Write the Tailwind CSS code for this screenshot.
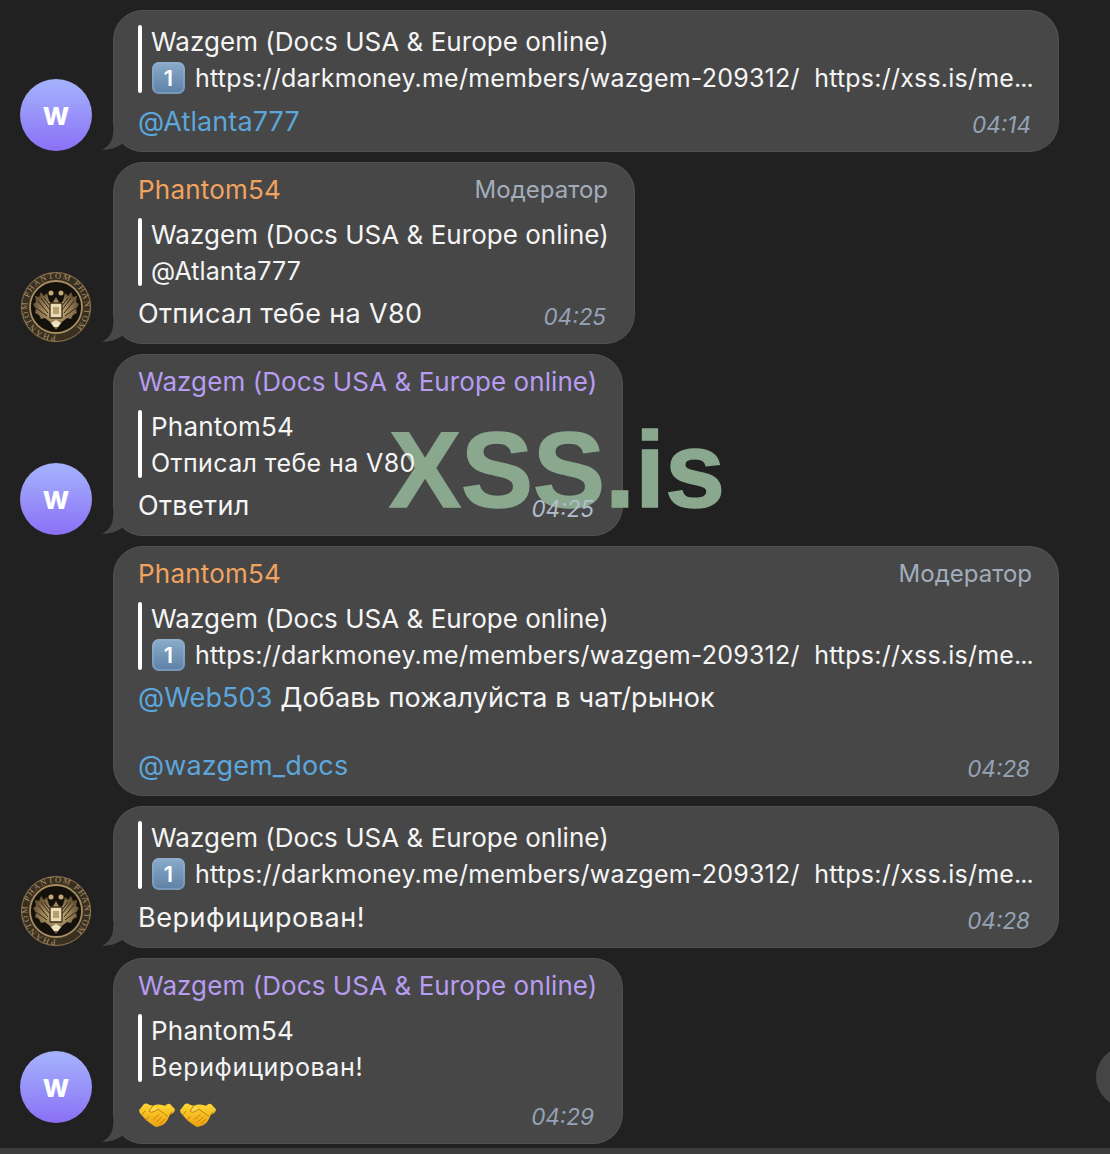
<!DOCTYPE html>
<html lang="ru">
<head>
<meta charset="utf-8">
<script src="https://cdn.jsdelivr.net/npm/@tailwindcss/browser@4"></script>
</head>
<body class="m-0 bg-[#212121]">
<svg width="0" height="0" class="absolute">
  <defs>
    <linearGradient id="hand" x1="0" y1="0" x2="0" y2="1"><stop offset="0" stop-color="#fdd835"/><stop offset="1" stop-color="#eea00f"/></linearGradient>
    <radialGradient id="gold"><stop offset="0" stop-color="#d8c08a"/><stop offset="1" stop-color="#6d5636"/></radialGradient>
    <symbol id="tail" viewBox="0 0 30 22"><path d="M11 0V3C11 11 6 17 0 19.5C8 20.5 17 17 23 12L30 0Z" fill="#474747"/></symbol>
    <symbol id="shake" viewBox="0 0 36 28" preserveAspectRatio="none">
      <path d="M0 8L5 1Q8 0 10 2L14 3Q18 1 22 2L26 3Q29 0 31 1L36 7Q36 10 33 12L31 13L28 20Q25 25 20 26Q17 28 14 25L7 19L3 14Q0 11 0 8Z" fill="url(#hand)"/>
      <path d="M14 3L10 9Q12 12 16 9L19 7L29 15" fill="#fff0a0" fill-opacity=".35" stroke="#c47f08" stroke-width="1" stroke-linejoin="round"/>
      <path d="M26 18L21 23M23 15.500L18 21M20 13L15 18M7 19L10 15M31 13L33 10M3 13L6 9" fill="none" stroke="#c47f08" stroke-width="1" stroke-linecap="round"/>
    </symbol>
    <symbol id="seal" viewBox="0 0 72 72">
      <circle cx="36" cy="36" r="35.500" fill="#3a3022"/>
      <circle cx="36" cy="36" r="34.500" fill="none" stroke="#8a7350" stroke-width="1"/>
      <circle cx="36" cy="36" r="26" fill="#14110c" stroke="#a78e61" stroke-width="1.800"/>
      <path id="sealring" d="M36 64.500A28.500 28.500 0 1 1 36.100 64.500" fill="none"/>
      <text font-family="Liberation Serif, serif" font-size="8.500" fill="#ab9366" letter-spacing="1.200"><textPath href="#sealring" startOffset="0%">PHANTOM  PHANTOM  PHANTOM</textPath></text>
      <path d="M36 26L32 33L29 30L27 22L24 25L21 21L19 26L15 25L16 31L13 33L16 38L15 42L19 44L21 48L25 47L30 51L33 55L36 59L39 55L42 51L47 47L51 48L53 44L57 42L56 38L59 33L56 31L57 25L53 26L51 21L48 25L45 22L43 30L40 33Z" fill="url(#gold)"/>
      <path d="M18 30L28 42M21 27L30 39M24 27L31 36M16 37L27 45M54 30L44 42M51 27L42 39M48 27L41 36M56 37L45 45" stroke="#2f2515" stroke-width="1" fill="none"/>
      <rect x="30" y="32" width="12" height="15" rx="1" fill="#eadbb5" stroke="#3c2e19" stroke-width="1.300"/>
      <rect x="33" y="36" width="6" height="7" fill="#b9a070"/>
      <circle cx="31" cy="22" r="2.500" fill="#c2a976"/><circle cx="41" cy="22" r="2.500" fill="#c2a976"/>
      <path d="M31 52L36 49L41 52L38 56H34Z" fill="#efe2c0"/>
    </symbol>
  </defs>
</svg>

<main class="relative h-[1154px] w-[1110px] overflow-hidden bg-[#212121] font-['Inter','Noto_Sans',sans-serif] text-[27px] leading-[34px] text-[#f5f5f5]">
  <div class="flex flex-col gap-[10px] pt-[10px]">

    <!-- 1 -->
    <div class="flex items-end pl-[20px]">
      <div class="mb-px flex h-[72px] w-[72px] items-center justify-center rounded-full bg-gradient-to-b from-[#a5b4fc] to-[#8b6ff5] pt-[2px] text-[25px] font-extrabold text-white">W</div>
      <article class="relative ml-[21px] w-[946px] rounded-[30px] bg-[#474747] pb-[13px] pl-[25px] pr-[26px] pt-[15px] shadow-[inset_0_0_0_1px_rgba(255,255,255,0.06)]">
        <svg class="absolute bottom-0 left-[-11px] h-[22px] w-[30px]"><use href="#tail"/></svg>
        <div class="flex h-[68px] gap-[9px]">
          <div class="w-[4px] shrink-0 rounded-full bg-white"></div>
          <div class="flex min-w-0 flex-1 flex-col justify-center pt-[2px] text-[25px] leading-[36px]">
            <p class="whitespace-nowrap text-[26px] tracking-[0.03px]">Wazgem (Docs USA &amp; Europe online)</p>
            <p class="flex items-center tracking-[0.22px]"><span class="ml-px mr-[10px] flex h-[32px] w-[33px] shrink-0 items-center justify-center rounded-[7px] bg-gradient-to-b from-[#8bacca] to-[#5d80a6] text-[22px] font-semibold leading-none text-white shadow-[inset_0_0_0_2px_rgba(150,180,210,0.45)]">1</span><span class="whitespace-pre">https://darkmoney.me/members/wazgem-209312/  https://xss.is/me<span class="tracking-[-1px]">...</span></span></p>
          </div>
        </div>
        <p class="mt-[12px] tracking-[0.1px] text-[#5ca6dc]">@Atlanta777</p>
        <time class="absolute bottom-[12px] right-[28px] text-[22.500px] italic leading-[30px] text-[#96a3b6]">04:14</time>
      </article>
    </div>

    <!-- 2 -->
    <div class="flex items-end pl-[20px]">
      <svg class="mb-px h-[72px] w-[72px]"><use href="#seal"/></svg>
      <article class="relative ml-[21px] w-[522px] rounded-[30px] bg-[#474747] pb-[13px] pl-[25px] pr-[27px] pt-[11px] shadow-[inset_0_0_0_1px_rgba(255,255,255,0.06)]">
        <svg class="absolute bottom-0 left-[-11px] h-[22px] w-[30px]"><use href="#tail"/></svg>
        <div class="flex items-center justify-between"><span class="text-[26px] tracking-[0.2px] text-[#f2a35e]">Phantom54</span><span class="text-[24px] text-[#a2adbc]">Модератор</span></div>
        <div class="mt-[11px] flex h-[68px] gap-[9px]">
          <div class="w-[4px] shrink-0 rounded-full bg-white"></div>
          <div class="flex min-w-0 flex-1 flex-col justify-center pt-[2px] text-[25px] leading-[36px]">
            <p class="whitespace-nowrap text-[26px] tracking-[0.03px]">Wazgem (Docs USA &amp; Europe online)</p>
            <p class="tracking-[0.1px]">@Atlanta777</p>
          </div>
        </div>
        <p class="mt-[11px] tracking-[0.35px]">Отписал тебе на V80</p>
        <time class="absolute bottom-[12px] right-[29px] text-[22.500px] italic leading-[30px] text-[#96a3b6]">04:25</time>
      </article>
    </div>

    <!-- 3 -->
    <div class="flex items-end pl-[20px]">
      <div class="mb-px flex h-[72px] w-[72px] items-center justify-center rounded-full bg-gradient-to-b from-[#a5b4fc] to-[#8b6ff5] pt-[2px] text-[25px] font-extrabold text-white">W</div>
      <article class="relative ml-[21px] w-[510px] rounded-[30px] bg-[#474747] pb-[13px] pl-[25px] pr-[27px] pt-[11px] shadow-[inset_0_0_0_1px_rgba(255,255,255,0.06)]">
        <svg class="absolute bottom-0 left-[-11px] h-[22px] w-[30px]"><use href="#tail"/></svg>
        <div class="whitespace-nowrap text-[26px] tracking-[0.08px] text-[#b79df2]">Wazgem (Docs USA &amp; Europe online)</div>
        <div class="relative z-20 mt-[11px] flex h-[68px] gap-[9px]">
          <div class="w-[4px] shrink-0 rounded-full bg-white"></div>
          <div class="flex min-w-0 flex-1 flex-col justify-center pt-[2px] text-[25px] leading-[36px]">
            <p class="text-[26px] tracking-[0.2px]">Phantom54</p>
            <p class="tracking-[0.4px]">Отписал тебе на V80</p>
          </div>
        </div>
        <p class="relative z-20 mt-[11px] tracking-[0.35px]">Ответил</p>
        <time class="absolute bottom-[12px] right-[29px] z-20 text-[22.500px] italic leading-[30px] text-[#b4bdcc]">04:25</time>
      </article>
    </div>

    <!-- 4 -->
    <div class="flex items-end pl-[113px]">
      <article class="relative w-[946px] rounded-[30px] bg-[#474747] pb-[13px] pl-[25px] pr-[26px] pt-[11px] shadow-[inset_0_0_0_1px_rgba(255,255,255,0.06)]">
        <div class="flex items-center justify-between pr-px"><span class="text-[26px] tracking-[0.2px] text-[#f2a35e]">Phantom54</span><span class="text-[24px] text-[#a2adbc]">Модератор</span></div>
        <div class="mt-[11px] flex h-[68px] gap-[9px]">
          <div class="w-[4px] shrink-0 rounded-full bg-white"></div>
          <div class="flex min-w-0 flex-1 flex-col justify-center pt-[2px] text-[25px] leading-[36px]">
            <p class="whitespace-nowrap text-[26px] tracking-[0.03px]">Wazgem (Docs USA &amp; Europe online)</p>
            <p class="flex items-center tracking-[0.22px]"><span class="ml-px mr-[10px] flex h-[32px] w-[33px] shrink-0 items-center justify-center rounded-[7px] bg-gradient-to-b from-[#8bacca] to-[#5d80a6] text-[22px] font-semibold leading-none text-white shadow-[inset_0_0_0_2px_rgba(150,180,210,0.45)]">1</span><span class="whitespace-pre">https://darkmoney.me/members/wazgem-209312/  https://xss.is/me<span class="tracking-[-1px]">...</span></span></p>
          </div>
        </div>
        <p class="mt-[11px] tracking-[0.12px]"><span class="text-[#5ca6dc]">@Web503</span> Добавь пожалуйста в чат/рынок</p>
        <p class="mt-[34px] tracking-[0.15px] text-[#5ca6dc]">@wazgem_docs</p>
        <time class="absolute bottom-[12px] right-[29px] text-[22.500px] italic leading-[30px] text-[#96a3b6]">04:28</time>
      </article>
    </div>

    <!-- 5 -->
    <div class="flex items-end pl-[20px]">
      <svg class="mb-px h-[72px] w-[72px]"><use href="#seal"/></svg>
      <article class="relative ml-[21px] w-[946px] rounded-[30px] bg-[#474747] pb-[13px] pl-[25px] pr-[26px] pt-[15px] shadow-[inset_0_0_0_1px_rgba(255,255,255,0.06)]">
        <svg class="absolute bottom-0 left-[-11px] h-[22px] w-[30px]"><use href="#tail"/></svg>
        <div class="flex h-[68px] gap-[9px]">
          <div class="w-[4px] shrink-0 rounded-full bg-white"></div>
          <div class="flex min-w-0 flex-1 flex-col justify-center pt-[2px] text-[25px] leading-[36px]">
            <p class="whitespace-nowrap text-[26px] tracking-[0.03px]">Wazgem (Docs USA &amp; Europe online)</p>
            <p class="flex items-center tracking-[0.22px]"><span class="ml-px mr-[10px] flex h-[32px] w-[33px] shrink-0 items-center justify-center rounded-[7px] bg-gradient-to-b from-[#8bacca] to-[#5d80a6] text-[22px] font-semibold leading-none text-white shadow-[inset_0_0_0_2px_rgba(150,180,210,0.45)]">1</span><span class="whitespace-pre">https://darkmoney.me/members/wazgem-209312/  https://xss.is/me<span class="tracking-[-1px]">...</span></span></p>
          </div>
        </div>
        <p class="mt-[12px] tracking-[0.55px]">Верифицирован!</p>
        <time class="absolute bottom-[12px] right-[29px] text-[22.500px] italic leading-[30px] text-[#96a3b6]">04:28</time>
      </article>
    </div>

    <!-- 6 -->
    <div class="flex items-end pl-[20px]">
      <div class="mb-[21px] flex h-[72px] w-[72px] items-center justify-center rounded-full bg-gradient-to-b from-[#a5b4fc] to-[#8b6ff5] pt-[2px] text-[25px] font-extrabold text-white">W</div>
      <article class="relative ml-[21px] w-[510px] rounded-[30px] bg-[#474747] pb-[12px] pl-[25px] pr-[27px] pt-[11px] shadow-[inset_0_0_0_1px_rgba(255,255,255,0.06)]">
        <svg class="absolute bottom-0 left-[-11px] h-[22px] w-[30px]"><use href="#tail"/></svg>
        <div class="whitespace-nowrap text-[26px] tracking-[0.08px] text-[#b79df2]">Wazgem (Docs USA &amp; Europe online)</div>
        <div class="mt-[11px] flex h-[68px] gap-[9px]">
          <div class="w-[4px] shrink-0 rounded-full bg-white"></div>
          <div class="flex min-w-0 flex-1 flex-col justify-center pt-[2px] text-[25px] leading-[36px]">
            <p class="text-[26px] tracking-[0.2px]">Phantom54</p>
            <p class="tracking-[0.65px]">Верифицирован!</p>
          </div>
        </div>
        <div class="mt-[10px] flex h-[40px] items-center gap-[5px] pl-px pt-[6px]">
          <svg class="h-[25px] w-[36px]"><use href="#shake"/></svg>
          <svg class="h-[25px] w-[36px]"><use href="#shake"/></svg>
        </div>
        <time class="absolute bottom-[12px] right-[29px] text-[22.500px] italic leading-[30px] text-[#96a3b6]">04:29</time>
      </article>
    </div>
  </div>

  <!-- overlays -->
  <div class="absolute left-[389px] top-[408px] z-10 font-['Liberation_Sans',sans-serif] text-[108px] font-bold leading-[124px] tracking-normal text-[#8aa88e] [-webkit-text-stroke:1.5px_#8aa88e]">XSS.is</div>
  <div class="absolute left-[1096px] top-[1047px] h-[60px] w-[60px] rounded-full bg-[#454545]"></div>
  <div class="absolute bottom-0 left-0 h-[6px] w-full bg-[#3d3d3d]"></div>
</main>
</body>
</html>
